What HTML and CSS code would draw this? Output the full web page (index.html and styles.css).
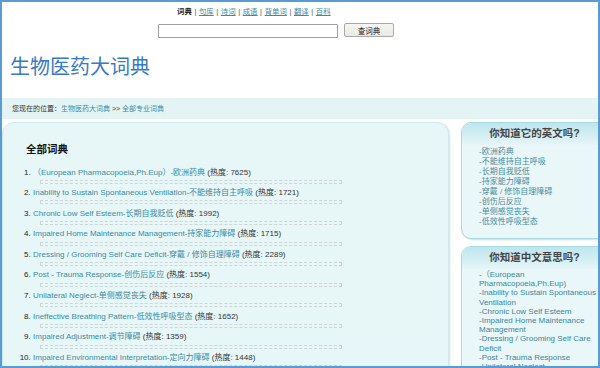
FILE: index.html
```html
<!DOCTYPE html>
<html lang="zh-CN">
<head>
  <meta charset="UTF-8" />
  <title>生物医药大词典 - 全部专业词典</title>
  <link rel="stylesheet" href="styles.css">
</head>
<body>
  <div class="frame">

    <!-- Top nav -->
    <div class="topnav">
      <b>词典</b><span class="sep">|</span><a href="#">句库</a><span class="sep">|</span><a href="#">诗词</a><span class="sep">|</span><a href="#">成语</a><span class="sep">|</span><a href="#">背单词</a><span class="sep">|</span><a href="#">翻译</a><span class="sep">|</span><a href="#">百科</a>
    </div>

    <!-- Search -->
    <div class="search">
      <input type="text" class="search-input" />
      <button class="search-btn">查词典</button>
    </div>

    <h1 class="title">生物医药大词典</h1>

    <div class="crumb">
      您现在的位置：<a href="#">生物医药大词典</a> &gt;&gt; <a href="#">全部专业词典</a>
    </div>

    <div class="content">
      <!-- Main list -->
      <div class="main-panel">
        <h2>全部词典</h2>
        <ol class="word-list">
          <li><a href="#">（European Pharmacopoeia,Ph.Eup）-欧洲药典</a> (热度: 7625)<div class="dash"></div></li>
          <li><a href="#">Inability to Sustain Spontaneous Ventilation-不能维持自主呼吸</a> (热度: 1721)<div class="dash"></div></li>
          <li><a href="#">Chronic Low Self Esteem-长期自我贬低</a> (热度: 1992)<div class="dash"></div></li>
          <li><a href="#">Impaired Home Maintenance Management-持家能力障碍</a> (热度: 1715)<div class="dash"></div></li>
          <li><a href="#">Dressing / Grooming Self Care Deficit-穿戴 / 修饰自理障碍</a> (热度: 2289)<div class="dash"></div></li>
          <li><a href="#">Post - Trauma Response-创伤后反应</a> (热度: 1554)<div class="dash"></div></li>
          <li><a href="#">Unilateral Neglect-单侧感觉丧失</a> (热度: 1928)<div class="dash"></div></li>
          <li><a href="#">Ineffective Breathing Pattern-低效性呼吸型态</a> (热度: 1652)<div class="dash"></div></li>
          <li><a href="#">Impaired Adjustment-调节障碍</a> (热度: 1359)<div class="dash"></div></li>
          <li><a href="#">Impaired Environmental Interpretation-定向力障碍</a> (热度: 1448)<div class="dash"></div></li>
        </ol>
      </div>

      <!-- Side boxes -->
      <div class="side">
        <div class="side-box">
          <h3>你知道它的英文吗?</h3>
          <ul class="side-list">
            <li><a href="#">-欧洲药典</a></li>
            <li><a href="#">-不能维持自主呼吸</a></li>
            <li><a href="#">-长期自我贬低</a></li>
            <li><a href="#">-持家能力障碍</a></li>
            <li><a href="#">-穿戴 / 修饰自理障碍</a></li>
            <li><a href="#">-创伤后反应</a></li>
            <li><a href="#">-单侧感觉丧失</a></li>
            <li><a href="#">-低效性呼吸型态</a></li>
          </ul>
        </div>
        <div class="side-box">
          <h3>你知道中文意思吗?</h3>
          <ul class="side-list en">
            <li><a href="#">-（European Pharmacopoeia,Ph.Eup)</a></li>
            <li><a href="#">-Inability to Sustain Spontaneous Ventilation</a></li>
            <li><a href="#">-Chronic Low Self Esteem</a></li>
            <li><a href="#">-Impaired Home Maintenance Management</a></li>
            <li><a href="#">-Dressing / Grooming Self Care Deficit</a></li>
            <li><a href="#">-Post - Trauma Response</a></li>
            <li><a href="#">-Unilateral Neglect</a></li>
            <li><a href="#">-Ineffective Breathing Pattern</a></li>
          </ul>
        </div>
      </div>
    </div>

  </div>
</body>
</html>
```

FILE: styles.css
```css
* {
  margin: 0;
  padding: 0;
  box-sizing: border-box;
}

body {
  font-family: 'Liberation Sans', 'Noto Sans CJK SC', sans-serif;
  color: #333;
  background: white;
}

a {
  color: #3a8ca3;
  text-decoration: none;
}

.frame {
  width: 600px;
  height: 368px;
  border: 2px solid #5b9bd5;
  overflow: hidden;
  padding-top: 4px;
}

/* Top nav */
.topnav {
  font-size: 7.4px;
  line-height: 12px;
  padding-left: 175px;
  color: #555;
}

.topnav b {
  color: #222;
}

.topnav a {
  text-decoration: underline;
}

.topnav .sep {
  margin: 0 2.6px;
}

/* Search */
.search {
  display: flex;
  align-items: flex-start;
  gap: 6px;
  padding-left: 156px;
  margin-top: 5px;
}

.search-input {
  width: 180px;
  height: 14px;
  margin-top: 1px;
  border: 1px solid #a0a0a0;
  border-radius: 1px;
  background: white;
}

.search-btn {
  width: 50px;
  height: 14px;
  font-size: 7.5px;
  font-family: 'Liberation Sans', 'Noto Sans CJK SC', sans-serif;
  color: #222;
  border: 1px solid #a9a9a9;
  border-radius: 2px;
  background: linear-gradient(#f6f6f4, #e9e9e6);
}

.title {
  font-size: 20px;
  line-height: 24px;
  font-weight: 400;
  color: #3878c0;
  margin: 17px 0 0 8px;
}

.crumb {
  margin-top: 19px;
  height: 21px;
  line-height: 21px;
  font-size: 7px;
  padding-left: 10px;
  background: #e4f4f5;
  color: #333;
}

/* Content */
.content {
  display: flex;
  align-items: flex-start;
  gap: 12px;
  margin-top: 3px;
}

.main-panel {
  width: 447px;
  flex-shrink: 0;
  height: 300px;
  background: #e7f6f7;
  border: 1px solid #cfeaee;
  border-radius: 12px;
  box-shadow: 1px 1px 2px rgba(120, 170, 180, 0.35);
  padding: 19px 0 0 23px;
}

.main-panel h2 {
  font-size: 10.5px;
  line-height: 14px;
  font-weight: 700;
  color: #111;
  margin-bottom: 10.5px;
}

.word-list {
  padding-left: 7px;
  font-size: 8px;
  line-height: 12px;
}

.word-list li::marker {
  color: #222;
}

.dash {
  width: 302px;
  height: 4px;
  margin: 1.3px 0 3.3px 7px;
  border: 1px dashed #cfd4d4;
}

/* Side */
.side {
  width: 147px;
  flex-shrink: 0;
  display: flex;
  flex-direction: column;
  gap: 7px;
}

.side-box {
  background: #e9f7f8;
  border: 1px solid #a9d9e1;
  border-radius: 10px;
  box-shadow: 1px 1px 2px rgba(120, 170, 180, 0.4);
  overflow: hidden;
  padding-bottom: 11px;
}

.side-box h3 {
  height: 22px;
  line-height: 21px;
  font-size: 10.5px;
  font-weight: 700;
  text-align: center;
  color: #444;
  background: linear-gradient(#bde6ed, #e6f5f7);
  margin-bottom: 1.5px;
}

.side-list {
  list-style: none;
  padding: 0 8px 0 17px;
  font-size: 8px;
  line-height: 10px;
}

.side-list a {
  color: #4a8ca0;
}

.side-list.en {
  line-height: 9.2px;
}

.side-list.en a {
  color: #3a86a0;
}
```
